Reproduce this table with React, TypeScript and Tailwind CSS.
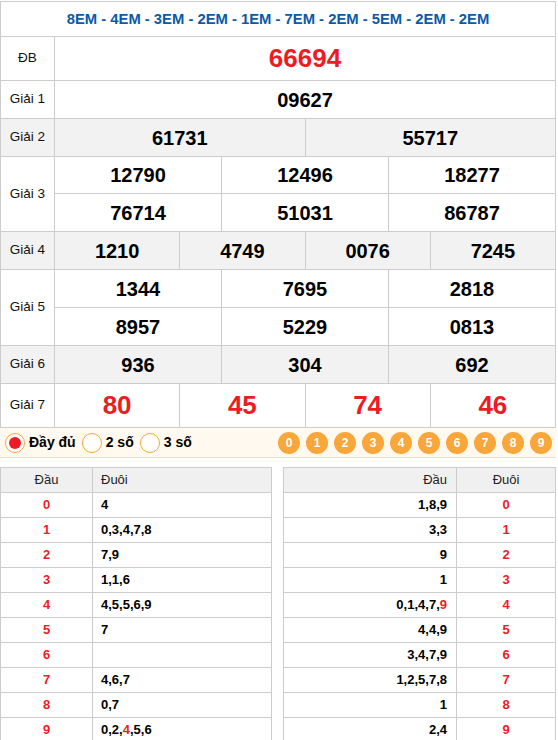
import type { ReactNode } from "react";

const font = "font-['Liberation_Sans',Arial,sans-serif]";
const cell = "border border-[#cccccc] text-center align-middle";
const num = "text-[20px] font-bold text-black";
const big = "text-[26px] font-bold text-[#ed1c24]";
const label = "border border-[#cccccc] text-center align-middle text-[13.5px] text-[#111]";

interface LotoRow {
	head: string;
	tail: string;
	hot?: number;
}

const leftRows: LotoRow[] = [
	{ head: "0", tail: "4" },
	{ head: "1", tail: "0,3,4,7,8" },
	{ head: "2", tail: "7,9" },
	{ head: "3", tail: "1,1,6" },
	{ head: "4", tail: "4,5,5,6,9" },
	{ head: "5", tail: "7" },
	{ head: "6", tail: "" },
	{ head: "7", tail: "4,6,7" },
	{ head: "8", tail: "0,7" },
	{ head: "9", tail: "0,2,4,5,6", hot: 2 },
];

const rightRows: LotoRow[] = [
	{ head: "1,8,9", tail: "0" },
	{ head: "3,3", tail: "1" },
	{ head: "9", tail: "2" },
	{ head: "1", tail: "3" },
	{ head: "0,1,4,7,9", tail: "4", hot: 4 },
	{ head: "4,4,9", tail: "5" },
	{ head: "3,4,7,9", tail: "6" },
	{ head: "1,2,5,7,8", tail: "7" },
	{ head: "1", tail: "8" },
	{ head: "2,4", tail: "9" },
];

function Digits({ text, hot }: { text: string; hot?: number }) {
	if (hot === undefined) return <>{text}</>;
	const parts = text.split(",");
	const out: ReactNode[] = [];
	parts.forEach((p, i) => {
		if (i > 0) out.push(",");
		out.push(
			<span key={i} className={i === hot ? "text-[#ed1c24]" : ""}>
				{p}
			</span>,
		);
	});
	return <>{out}</>;
}

function Radio({ on, text }: { on?: boolean; text: string }) {
	return (
		<label className="flex items-center gap-[4px] mr-[6px]">
			<span className="w-[20px] h-[20px] rounded-full border border-[#f6a83a] bg-white flex items-center justify-center">
				{on && <span className="w-[12px] h-[12px] rounded-full bg-[#ed1c24]" />}
			</span>
			<span className="text-[14px] font-bold text-black">{text}</span>
		</label>
	);
}

function App() {
	const cols = Array.from({ length: 12 });

	return (
		<div className={`${font} w-[558px] bg-white pt-[1px]`}>
			<table className="w-[556px] table-fixed border-collapse">
				<colgroup>
					<col className="w-[54px]" />
					{cols.map((_, i) => (
						<col key={i} />
					))}
				</colgroup>
				<tbody>
					<tr className="h-[35px]">
						<td
							colSpan={13}
							className={`${cell} text-[14.8px] font-bold text-[#0b5aa8]`}
						>
							8EM - 4EM - 3EM - 2EM - 1EM - 7EM - 2EM - 5EM - 2EM - 2EM
						</td>
					</tr>
					<tr className="h-[44px]">
						<td className={label}>ĐB</td>
						<td colSpan={12} className={`${cell} ${big}`}>
							66694
						</td>
					</tr>
					<tr className="h-[38px]">
						<td className={label}>Giải 1</td>
						<td colSpan={12} className={`${cell} ${num}`}>
							09627
						</td>
					</tr>
					<tr className="h-[38px] bg-[#f2f2f2]">
						<td className={label}>Giải 2</td>
						<td colSpan={6} className={`${cell} ${num}`}>
							61731
						</td>
						<td colSpan={6} className={`${cell} ${num}`}>
							55717
						</td>
					</tr>
					<tr className="h-[37px]">
						<td rowSpan={2} className={label}>
							Giải 3
						</td>
						<td colSpan={4} className={`${cell} ${num}`}>12790</td>
						<td colSpan={4} className={`${cell} ${num}`}>12496</td>
						<td colSpan={4} className={`${cell} ${num}`}>18277</td>
					</tr>
					<tr className="h-[38px]">
						<td colSpan={4} className={`${cell} ${num}`}>76714</td>
						<td colSpan={4} className={`${cell} ${num}`}>51031</td>
						<td colSpan={4} className={`${cell} ${num}`}>86787</td>
					</tr>
					<tr className="h-[38px] bg-[#f2f2f2]">
						<td className={label}>Giải 4</td>
						<td colSpan={3} className={`${cell} ${num}`}>1210</td>
						<td colSpan={3} className={`${cell} ${num}`}>4749</td>
						<td colSpan={3} className={`${cell} ${num}`}>0076</td>
						<td colSpan={3} className={`${cell} ${num}`}>7245</td>
					</tr>
					<tr className="h-[38px]">
						<td rowSpan={2} className={label}>
							Giải 5
						</td>
						<td colSpan={4} className={`${cell} ${num}`}>1344</td>
						<td colSpan={4} className={`${cell} ${num}`}>7695</td>
						<td colSpan={4} className={`${cell} ${num}`}>2818</td>
					</tr>
					<tr className="h-[38px]">
						<td colSpan={4} className={`${cell} ${num}`}>8957</td>
						<td colSpan={4} className={`${cell} ${num}`}>5229</td>
						<td colSpan={4} className={`${cell} ${num}`}>0813</td>
					</tr>
					<tr className="h-[38px] bg-[#f2f2f2]">
						<td className={label}>Giải 6</td>
						<td colSpan={4} className={`${cell} ${num}`}>936</td>
						<td colSpan={4} className={`${cell} ${num}`}>304</td>
						<td colSpan={4} className={`${cell} ${num}`}>692</td>
					</tr>
					<tr className="h-[44px]">
						<td className={label}>Giải 7</td>
						<td colSpan={3} className={`${cell} ${big}`}>80</td>
						<td colSpan={3} className={`${cell} ${big}`}>45</td>
						<td colSpan={3} className={`${cell} ${big}`}>74</td>
						<td colSpan={3} className={`${cell} ${big}`}>46</td>
					</tr>
				</tbody>
			</table>

			<div className="w-[556px] h-[30px] flex items-center pl-[5px] pr-[4px] bg-[#fff9ef] border-b border-[#fbdcb3]">
				<Radio on text="Đầy đủ" />
				<Radio text="2 số" />
				<Radio text="3 số" />
				<div className="ml-auto flex gap-[6px]">
					{"0123456789".split("").map((d) => (
						<span
							key={d}
							className="w-[22px] h-[22px] rounded-full bg-[#f9a63a] text-white text-[12px] font-bold flex items-center justify-center"
						>
							{d}
						</span>
					))}
				</div>
			</div>

			<div className="w-[556px] flex justify-between mt-[9px]">
				<table className="w-[272px] table-fixed border-collapse text-[13px]">
					<colgroup>
						<col className="w-[92px]" />
						<col />
					</colgroup>
					<tbody>
						<tr className="h-[25px] bg-[#f0f0f0]">
							<td className="border border-[#cccccc] text-center text-[#222]">Đầu</td>
							<td className="border border-[#cccccc] pl-[8px] text-[#222]">Đuôi</td>
						</tr>
						{leftRows.map((r) => (
							<tr key={r.head} className="h-[25px]">
								<td className="border border-[#cccccc] text-center font-bold text-[#ed1c24]">
									{r.head}
								</td>
								<td className="border border-[#cccccc] pl-[8px] font-bold text-black">
									<Digits text={r.tail} hot={r.hot} />
								</td>
							</tr>
						))}
					</tbody>
				</table>
				<table className="w-[273px] table-fixed border-collapse text-[13px]">
					<colgroup>
						<col />
						<col className="w-[99px]" />
					</colgroup>
					<tbody>
						<tr className="h-[25px] bg-[#f0f0f0]">
							<td className="border border-[#cccccc] text-right pr-[9px] text-[#222]">Đầu</td>
							<td className="border border-[#cccccc] text-center text-[#222]">Đuôi</td>
						</tr>
						{rightRows.map((r) => (
							<tr key={r.tail} className="h-[25px]">
								<td className="border border-[#cccccc] text-right pr-[9px] font-bold text-black">
									<Digits text={r.head} hot={r.hot} />
								</td>
								<td className="border border-[#cccccc] text-center font-bold text-[#ed1c24]">
									{r.tail}
								</td>
							</tr>
						))}
					</tbody>
				</table>
			</div>
		</div>
	);
}

export default App;
